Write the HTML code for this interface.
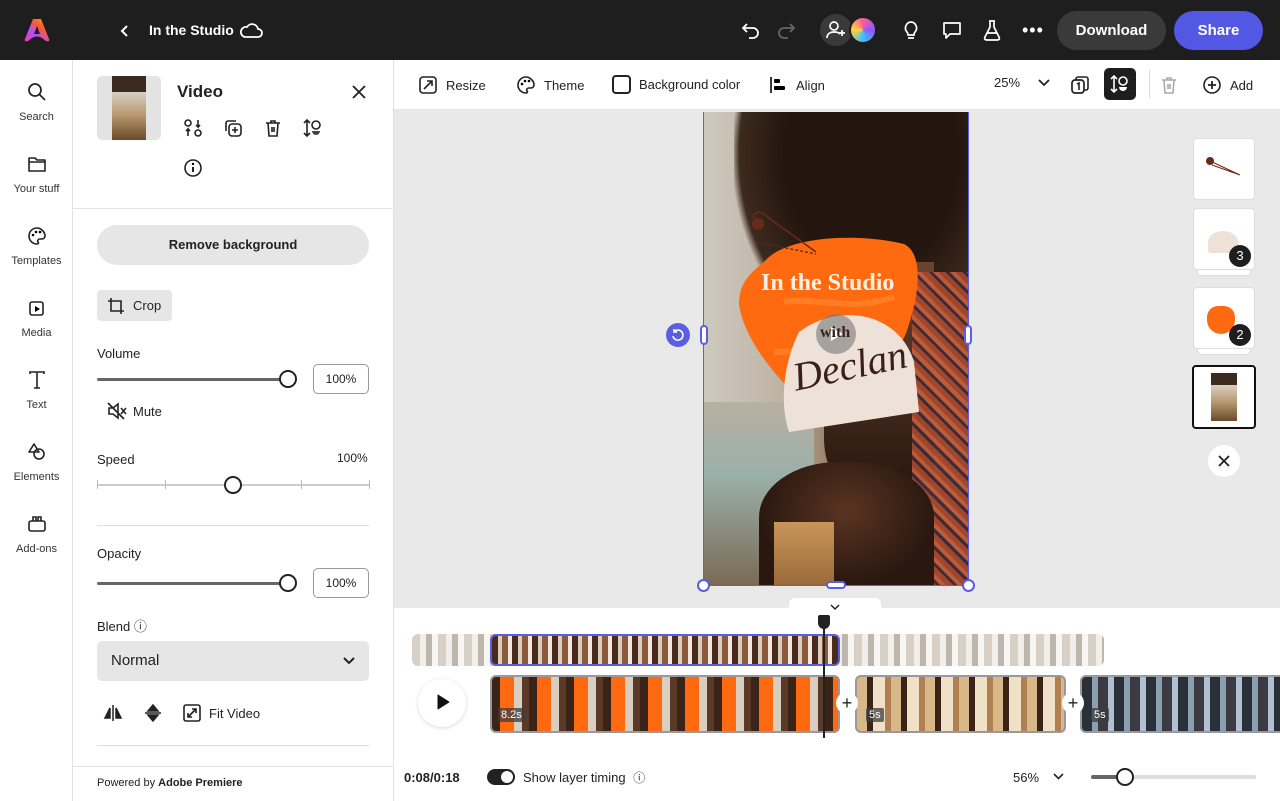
<!DOCTYPE html>
<html><head><meta charset="utf-8"><style>
*{box-sizing:border-box;margin:0;padding:0}
body{width:1280px;height:801px;overflow:hidden;font-family:"Liberation Sans",sans-serif;background:#e9e9e9;position:relative;color:#222}
.abs{position:absolute}
svg{display:block}
.top{left:0;top:0;width:1280px;height:60px;background:#1e1e1e;color:#fff}
.rail{left:0;top:60px;width:73px;height:741px;background:#fff;border-right:1px solid #e1e1e1}
.rail .it{position:absolute;left:0;width:73px;text-align:center;font-size:11px;color:#333}
.rail .it svg{margin:0 auto 9px}
.panel{left:73px;top:60px;width:321px;height:741px;background:#fff;border-right:1px solid #e1e1e1}
.tb{left:394px;top:60px;width:886px;height:50px;background:#fff;border-bottom:1px solid #e4e4e4;font-size:13px;color:#222}
.tb .b{position:absolute;top:15px;display:flex;align-items:center;gap:8px}
.tl{left:394px;top:608px;width:886px;height:193px;background:#fff}
.strip{background:repeating-linear-gradient(90deg,#b8aa98 0 8px,#e8e2d8 8px 14px,#8a7a6a 14px 20px,#f2eee8 20px 26px)}
.slider{height:3px;background:#666;border-radius:2px}
.knob{width:18px;height:18px;border:2px solid #222;border-radius:50%;background:#fff}
.inp{width:56px;height:30px;border:1.5px solid #999;border-radius:5px;font-size:12px;display:flex;align-items:center;justify-content:center}
</style></head><body>

<div class="abs top">
 <svg class="abs" style="left:24px;top:18px" width="26" height="24" viewBox="0 0 26 24"><defs><linearGradient id="g" x1="0" y1="1" x2="1" y2="0"><stop offset="0" stop-color="#ff3a9a"/><stop offset=".35" stop-color="#b050ff"/><stop offset=".65" stop-color="#ff5a2a"/><stop offset="1" stop-color="#ffbb00"/></linearGradient></defs><path d="M9 1h8l8 20c1 2-1 3-3 2l-4-3c-3-2-7-2-10 0l-4 3c-2 1-4 0-3-2z" fill="url(#g)"/><path d="M13 8l3 8h-6z" fill="#1e1e1e"/></svg>
 <svg class="abs" style="left:120px;top:24px" width="10" height="14" viewBox="0 0 10 14"><path d="M7 2L2 7l5 5" stroke="#fff" stroke-width="2" fill="none"/></svg>
 <div class="abs" style="left:149px;top:22px;font-size:14px;font-weight:bold">In the Studio</div>
 <svg class="abs" style="left:239px;top:21px" width="24" height="18" viewBox="0 0 24 18"><path d="M6 16h13a4 4 0 000-8 6 6 0 00-11-2 5 5 0 00-2 10z" stroke="#fff" stroke-width="1.8" fill="none"/></svg>
 <svg class="abs" style="left:741px;top:20px" width="20" height="20" viewBox="0 0 20 20"><path d="M6 4L2 8l4 4M2 8h10a5 5 0 010 10H8" stroke="#fff" stroke-width="1.8" fill="none"/></svg>
 <svg class="abs" style="left:776px;top:20px" width="20" height="20" viewBox="0 0 20 20"><path d="M14 4l4 4-4 4M18 8H8a5 5 0 000 10h4" stroke="#666" stroke-width="1.8" fill="none"/></svg>
 <div class="abs" style="left:820px;top:14px;width:32px;height:32px;border-radius:50%;background:#3a3a3a"></div>
 <svg class="abs" style="left:826px;top:20px" width="22" height="20" viewBox="0 0 22 20"><circle cx="8" cy="6" r="4" stroke="#fff" stroke-width="1.7" fill="none"/><path d="M1 18c0-4 3-6 7-6s5 1 6 2M16 10v6M13 13h6" stroke="#fff" stroke-width="1.7" fill="none"/></svg>
 <div class="abs" style="left:849px;top:16px;width:28px;height:28px;border-radius:50%;background:conic-gradient(#ff5a9a,#8a5aff,#3ac0ff,#ffd23a,#ff5a9a);border:2px solid #1e1e1e"></div>
 <svg class="abs" style="left:902px;top:20px" width="18" height="20" viewBox="0 0 18 20"><path d="M9 2a6 6 0 00-4 10c1 1 1 2 1 3h6c0-1 0-2 1-3A6 6 0 009 2zM6 18h6" stroke="#fff" stroke-width="1.7" fill="none"/></svg>
 <svg class="abs" style="left:942px;top:20px" width="20" height="20" viewBox="0 0 20 20"><path d="M2 3h16v11H8l-4 4v-4H2z" stroke="#fff" stroke-width="1.7" fill="none" stroke-linejoin="round"/></svg>
 <svg class="abs" style="left:982px;top:19px" width="20" height="22" viewBox="0 0 20 22"><path d="M7 2h6M8 2v6L3 18c-1 2 0 3 2 3h10c2 0 3-1 2-3L12 8V2M5 14h10" stroke="#fff" stroke-width="1.7" fill="none"/></svg>
 <div class="abs" style="left:1022px;top:20px;font-size:18px;letter-spacing:1px">•••</div>
 <div class="abs" style="left:1057px;top:11px;width:109px;height:39px;border-radius:20px;background:#3a3a3a;font-size:15px;font-weight:bold;text-align:center;line-height:39px">Download</div>
 <div class="abs" style="left:1174px;top:11px;width:89px;height:39px;border-radius:20px;background:#5258e4;font-size:15px;font-weight:bold;text-align:center;line-height:39px">Share</div>
</div>

<div class="abs rail">
 <div class="it" style="top:22px"><svg width="20" height="20" viewBox="0 0 20 20"><circle cx="8" cy="8" r="6" stroke="#222" stroke-width="1.7" fill="none"/><path d="M12.5 12.5L18 18" stroke="#222" stroke-width="1.7"/></svg>Search</div>
 <div class="it" style="top:94px"><svg width="20" height="20" viewBox="0 0 20 20"><path d="M2 4h6l2 2h8v11H2zM2 8h16" stroke="#222" stroke-width="1.6" fill="none" stroke-linejoin="round"/></svg>Your stuff</div>
 <div class="it" style="top:166px"><svg width="20" height="20" viewBox="0 0 20 20"><path d="M10 2a8 8 0 100 16c1 0 2-1 1-2s0-3 2-3h2a3 3 0 003-3c0-4-4-8-8-8z" stroke="#222" stroke-width="1.6" fill="none"/><circle cx="6" cy="9" r="1.3"/><circle cx="9" cy="6" r="1.3"/><circle cx="13" cy="6" r="1.3"/></svg>Templates</div>
 <div class="it" style="top:238px"><svg width="20" height="20" viewBox="0 0 20 20"><rect x="3" y="4" width="13" height="13" rx="2" stroke="#222" stroke-width="1.6" fill="none"/><path d="M8 8l5 3-5 3z"/></svg>Media</div>
 <div class="it" style="top:310px"><svg width="20" height="20" viewBox="0 0 20 20"><path d="M3 4V2h14v2M10 2v16M7 18h6" stroke="#222" stroke-width="1.6" fill="none"/></svg>Text</div>
 <div class="it" style="top:382px"><svg width="20" height="20" viewBox="0 0 20 20"><circle cx="12" cy="12" r="5" stroke="#222" stroke-width="1.6" fill="none"/><path d="M7 2l5 8H2z" stroke="#222" stroke-width="1.6" fill="none" stroke-linejoin="round"/></svg>Elements</div>
 <div class="it" style="top:454px"><svg width="20" height="20" viewBox="0 0 20 20"><rect x="2" y="7" width="16" height="10" rx="2" stroke="#222" stroke-width="1.6" fill="none"/><path d="M6 7V3h3v4M11 7V3h3v4" stroke="#222" stroke-width="1.6" fill="none"/></svg>Add-ons</div>
</div>

<div class="abs panel">
 <div class="abs" style="left:24px;top:16px;width:64px;height:64px;border-radius:5px;background:#e3e3e3;overflow:hidden"><div style="margin-left:15px;width:34px;height:64px;background:linear-gradient(180deg,#3a2a20 0 25%,#d8cfc2 25%,#b89a70 60%,#6a4a2a)"></div></div>
 <div class="abs" style="left:104px;top:22px;font-size:17px;font-weight:bold">Video</div>
 <svg class="abs" style="left:279px;top:25px" width="14" height="14" viewBox="0 0 14 14"><path d="M1 1l12 12M13 1L1 13" stroke="#222" stroke-width="1.8"/></svg>
 <svg class="abs" style="left:110px;top:58px" width="20" height="20" viewBox="0 0 20 20"><circle cx="5" cy="5" r="3" stroke="#222" stroke-width="1.6" fill="none"/><circle cx="15" cy="15" r="3" stroke="#222" stroke-width="1.6" fill="none"/><path d="M15 2v7l-2-2M15 9l2-2M5 18v-7l-2 2M5 11l2 2" stroke="#222" stroke-width="1.6" fill="none"/></svg>
 <svg class="abs" style="left:150px;top:58px" width="20" height="20" viewBox="0 0 20 20"><rect x="6" y="6" width="12" height="12" rx="3" stroke="#222" stroke-width="1.6" fill="none"/><path d="M3 13V5a2 2 0 012-2h8M12 9v6M9 12h6" stroke="#222" stroke-width="1.6" fill="none"/></svg>
 <svg class="abs" style="left:190px;top:58px" width="20" height="20" viewBox="0 0 20 20"><path d="M3 5h14M8 5V3h4v2M5 5l1 13h8l1-13M9 9v5M11 9v5" stroke="#222" stroke-width="1.6" fill="none"/></svg>
 <svg class="abs" style="left:230px;top:58px" width="20" height="20" viewBox="0 0 20 20"><path d="M4 2v16M1 5l3-3 3 3M1 15l3 3 3-3" stroke="#222" stroke-width="1.6" fill="none"/><circle cx="13" cy="7" r="4" stroke="#222" stroke-width="1.6" fill="none"/><path d="M9 13h8a4 4 0 01-8 0z" fill="#444"/></svg>
 <svg class="abs" style="left:110px;top:98px" width="20" height="20" viewBox="0 0 20 20"><circle cx="10" cy="10" r="8" stroke="#222" stroke-width="1.6" fill="none"/><path d="M10 9v5" stroke="#222" stroke-width="2"/><circle cx="10" cy="6" r="1.2"/></svg>
 <div class="abs" style="left:0;top:148px;width:321px;height:1px;background:#e4e4e4"></div>
 <div class="abs" style="left:24px;top:165px;width:272px;height:40px;border-radius:20px;background:#e6e6e6;font-size:13px;font-weight:bold;text-align:center;line-height:40px">Remove background</div>
 <div class="abs" style="left:24px;top:230px;width:75px;height:31px;border-radius:4px;background:#e6e6e6;font-size:13px;display:flex;align-items:center;gap:8px;padding-left:10px"><svg width="18" height="18" viewBox="0 0 18 18"><path d="M4 1v13h13M1 4h13v13" stroke="#222" stroke-width="1.6" fill="none"/></svg>Crop</div>
 <div class="abs" style="left:24px;top:286px;font-size:13px">Volume</div>
 <div class="abs slider" style="left:24px;top:318px;width:190px"></div>
 <div class="abs knob" style="left:206px;top:310px"></div>
 <div class="abs inp" style="left:240px;top:304px">100%</div>
 <svg class="abs" style="left:34px;top:342px" width="20" height="18" viewBox="0 0 20 18"><path d="M2 6h4l5-4v14l-5-4H2zM14 6l5 6M19 6l-5 6M1 1l16 16" stroke="#222" stroke-width="1.6" fill="none"/></svg>
 <div class="abs" style="left:60px;top:344px;font-size:13px">Mute</div>
 <div class="abs" style="left:24px;top:392px;font-size:13px">Speed</div>
 <div class="abs" style="left:264px;top:391px;font-size:12px">100%</div>
 <div class="abs" style="left:24px;top:424px;width:272px;height:2px;background:#ccc"></div>
 <div class="abs" style="left:24px;top:420px;width:1px;height:9px;background:#bbb"></div><div class="abs" style="left:92px;top:420px;width:1px;height:9px;background:#bbb"></div><div class="abs" style="left:228px;top:420px;width:1px;height:9px;background:#bbb"></div><div class="abs" style="left:296px;top:420px;width:1px;height:9px;background:#bbb"></div>
 <div class="abs knob" style="left:151px;top:416px"></div>
 <div class="abs" style="left:24px;top:465px;width:272px;height:1px;background:#ddd"></div>
 <div class="abs" style="left:24px;top:486px;font-size:13px">Opacity</div>
 <div class="abs slider" style="left:24px;top:522px;width:190px"></div>
 <div class="abs knob" style="left:206px;top:514px"></div>
 <div class="abs inp" style="left:240px;top:508px">100%</div>
 <div class="abs" style="left:24px;top:556px;font-size:13px">Blend ⓘ</div>
 <div class="abs" style="left:24px;top:581px;width:272px;height:40px;border-radius:5px;background:#e6e6e6;font-size:15px;line-height:40px;padding-left:14px">Normal</div>
 <svg class="abs" style="left:269px;top:596px" width="14" height="10" viewBox="0 0 14 10"><path d="M2 2l5 5 5-5" stroke="#222" stroke-width="2" fill="none"/></svg>
 <svg class="abs" style="left:30px;top:644px" width="20" height="18" viewBox="0 0 20 18"><path d="M10 1v16M7 4L2 14h5zM13 4l5 10h-5z" stroke="#222" stroke-width="1.5" fill="#222"/></svg>
 <svg class="abs" style="left:70px;top:644px" width="20" height="18" viewBox="0 0 20 18"><path d="M2 9h16M5 7l5-6 5 6zM5 11l5 6 5-6z" stroke="#222" stroke-width="1.5" fill="#222"/></svg>
 <svg class="abs" style="left:110px;top:644px" width="18" height="18" viewBox="0 0 18 18"><rect x="1" y="1" width="16" height="16" rx="2" stroke="#222" stroke-width="1.6" fill="none"/><path d="M5 13l8-8M9 5h4v4M5 9v4h4" stroke="#222" stroke-width="1.6" fill="none"/></svg>
 <div class="abs" style="left:136px;top:646px;font-size:13px">Fit Video</div>
 <div class="abs" style="left:24px;top:685px;width:272px;height:1px;background:#ddd"></div>
 <div class="abs" style="left:0;top:706px;width:321px;height:1px;background:#e4e4e4"></div>
 <div class="abs" style="left:24px;top:717px;font-size:11px">Powered by <b>Adobe Premiere</b></div>
</div>

<div class="abs tb">
 <div class="b" style="left:24px"><svg width="20" height="20" viewBox="0 0 20 20"><rect x="2" y="2" width="16" height="16" rx="3" stroke="#222" stroke-width="1.6" fill="none"/><path d="M6 14l8-8M9 6h5v5" stroke="#222" stroke-width="1.6" fill="none"/></svg>Resize</div>
 <div class="b" style="left:122px"><svg width="20" height="20" viewBox="0 0 20 20"><path d="M10 2a8 8 0 100 16c1 0 2-1 1-2s0-3 2-3h2a3 3 0 003-3c0-4-4-8-8-8z" stroke="#222" stroke-width="1.6" fill="none"/><circle cx="6" cy="9" r="1.3"/><circle cx="9" cy="6" r="1.3"/><circle cx="13" cy="6" r="1.3"/></svg>Theme</div>
 <div class="b" style="left:218px"><div style="width:19px;height:19px;border:2px solid #222;border-radius:4px"></div>Background color</div>
 <div class="b" style="left:374px"><svg width="20" height="20" viewBox="0 0 20 20"><path d="M3 2v16" stroke="#222" stroke-width="1.8"/><rect x="6" y="4" width="6" height="4" rx="1"/><rect x="6" y="11" width="11" height="4" rx="1"/></svg>Align</div>
 <div class="b" style="left:600px">25% <svg width="12" height="8" viewBox="0 0 12 8" style="margin-left:10px"><path d="M1 1l5 5 5-5" stroke="#222" stroke-width="1.8" fill="none"/></svg></div>
 <svg class="abs" style="left:676px;top:15px" width="20" height="20" viewBox="0 0 20 20"><rect x="2" y="5" width="12" height="13" rx="3" stroke="#222" stroke-width="1.7" fill="none"/><path d="M6 5V4a2 2 0 012-2h8a2 2 0 012 2v9a2 2 0 01-2 2h-2M7 9l2-1v7" stroke="#222" stroke-width="1.6" fill="none"/></svg>
 <div class="abs" style="left:710px;top:8px;width:32px;height:32px;border-radius:5px;background:#1e1e1e"></div>
 <svg class="abs" style="left:716px;top:14px" width="20" height="20" viewBox="0 0 20 20"><path d="M4 2v16M1 5l3-3 3 3M1 15l3 3 3-3" stroke="#fff" stroke-width="1.6" fill="none"/><circle cx="13" cy="7" r="4" stroke="#fff" stroke-width="1.6" fill="none"/><path d="M9 13h8a4 4 0 01-8 0z" fill="#fff"/></svg>
 <div class="abs" style="left:755px;top:10px;width:1px;height:28px;background:#ddd"></div>
 <svg class="abs" style="left:765px;top:15px" width="20" height="20" viewBox="0 0 20 20"><path d="M3 5h14M8 5V3h4v2M5 5l1 13h8l1-13M9 9v5M11 9v5" stroke="#aaa" stroke-width="1.6" fill="none"/></svg>
 <div class="b" style="left:808px"><svg width="20" height="20" viewBox="0 0 20 20"><circle cx="10" cy="10" r="8" stroke="#222" stroke-width="1.6" fill="none"/><path d="M10 6v8M6 10h8" stroke="#222" stroke-width="1.8"/></svg>Add</div>
</div>

<!-- canvas -->
<div class="abs" style="left:704px;top:112px;width:264px;height:473px;overflow:hidden;background:linear-gradient(90deg,#cfc9be 0%,#bdb3a4 30%,#8a6a50 55%,#4a2e20 100%)">
 <div class="abs" style="left:0;top:290px;width:110px;height:183px;background:linear-gradient(180deg,#b8b0a0,#9ab0aa 40%,#7a6a55)"></div>
 <div class="abs" style="left:30px;top:-40px;width:250px;height:270px;border-radius:0 0 45% 35%;background:radial-gradient(ellipse at 55% 30%,#24160e 45%,#3d2a1e 68%,transparent 72%)"></div>
 <div class="abs" style="left:120px;top:150px;width:110px;height:220px;background:linear-gradient(180deg,#6a4430,#2a1810);border-radius:30% 0 0 20%"></div>
 <div class="abs" style="left:208px;top:160px;width:56px;height:313px;background:repeating-linear-gradient(45deg,#a8482e 0 5px,#3a2a3a 5px 8px,#c8603a 8px 12px);opacity:.9"></div>
 <div class="abs" style="left:55px;top:350px;width:175px;height:123px;background:radial-gradient(ellipse at 50% 40%,#5a3422,#2a1810 70%);border-radius:45% 45% 0 0"></div>
 <div class="abs" style="left:70px;top:410px;width:60px;height:63px;background:linear-gradient(180deg,#c8965a,#9a6a3a)"></div>
 <svg class="abs" style="left:0;top:0" width="264" height="473" viewBox="0 0 264 473"><path d="M60 150c20-25 90-30 140-18 20 10 15 50 5 80-10 40-60 75-90 90-30-20-75-70-80-110 0-20 10-30 25-42z" fill="#ff6a10"/><path d="M80 190c30-5 70 10 110-5M70 240c40 0 80-15 125 5" stroke="#ff8a30" stroke-width="6" fill="none" opacity=".6"/><path d="M95 220c40-30 100-20 115 30l5 50-130 20c-10-30-5-70 10-100z" fill="#eee2d8"/><path d="M52 110c-8-8 5-14 10-6l50 36" stroke="#6a2a1a" stroke-width="1.5" fill="none"/><circle cx="54" cy="112" r="6" fill="#6a2a1a"/><path d="M52 130l60 12" stroke="#5a2a1a" stroke-width="1.3" stroke-dasharray="3 2"/></svg>
 <div class="abs" style="left:57px;top:158px;font-family:'Liberation Serif',serif;font-weight:bold;font-size:24px;color:#fdf0e0">In the Studio</div>
 <div class="abs" style="left:112px;top:202px;width:40px;height:40px;border-radius:50%;background:rgba(120,120,120,.6)"></div>
 <svg class="abs" style="left:126px;top:214px" width="14" height="16" viewBox="0 0 14 16"><path d="M1 1l12 7-12 7z" fill="#fff"/></svg>
 <div class="abs" style="left:116px;top:212px;font-family:'Liberation Serif',serif;font-weight:bold;font-size:16px;color:#3a2018">with</div>
 <div class="abs" style="left:88px;top:230px;font-family:'Liberation Serif',serif;font-style:italic;font-size:40px;color:#3a2018;transform:rotate(-12deg)">Declan</div>
</div>
<div class="abs" style="left:703px;top:112px;width:266px;height:474px;border:1.5px solid #5a5ee0;border-top:none"></div>
<div class="abs" style="left:700px;top:325px;width:8px;height:20px;border:2px solid #5a5ee0;border-radius:4px;background:#fff"></div>
<div class="abs" style="left:964px;top:325px;width:8px;height:20px;border:2px solid #5a5ee0;border-radius:4px;background:#fff"></div>
<div class="abs" style="left:826px;top:581px;width:20px;height:8px;border:2px solid #5a5ee0;border-radius:4px;background:#fff"></div>
<div class="abs" style="left:697px;top:579px;width:13px;height:13px;border:2px solid #5a5ee0;border-radius:50%;background:#fff"></div>
<div class="abs" style="left:962px;top:579px;width:13px;height:13px;border:2px solid #5a5ee0;border-radius:50%;background:#fff"></div>
<div class="abs" style="left:666px;top:323px;width:24px;height:24px;border-radius:50%;background:#5a5ee0"></div>
<svg class="abs" style="left:671px;top:328px" width="14" height="14" viewBox="0 0 14 14"><path d="M3 4a5 5 0 11-1 4M3 1v3h3" stroke="#fff" stroke-width="1.6" fill="none"/></svg>

<!-- layers -->
<div class="abs" style="left:1193px;top:138px;width:62px;height:62px;background:#fff;border:1px solid #ddd;border-radius:4px"><svg width="60" height="60" viewBox="0 0 60 60"><circle cx="16" cy="22" r="4" fill="#6a2a1a"/><path d="M16 22l30 14M18 26l28 10" stroke="#6a2a1a" stroke-width="1"/></svg></div>
<div class="abs" style="left:1197px;top:268px;width:54px;height:8px;background:#fff;border:1px solid #ddd;border-radius:0 0 4px 4px"></div>
<div class="abs" style="left:1193px;top:208px;width:62px;height:62px;background:#fff;border:1px solid #ddd;border-radius:4px"><div style="margin:22px 0 0 14px;width:30px;height:22px;background:#eee2d8;border-radius:50% 50% 10% 10%"></div></div>
<div class="abs" style="left:1229px;top:245px;width:22px;height:22px;border-radius:50%;background:#1e1e1e;color:#fff;font-size:13px;text-align:center;line-height:22px">3</div>
<div class="abs" style="left:1197px;top:347px;width:54px;height:8px;background:#fff;border:1px solid #ddd;border-radius:0 0 4px 4px"></div>
<div class="abs" style="left:1193px;top:287px;width:62px;height:62px;background:#fff;border:1px solid #ddd;border-radius:4px"><div style="margin:18px 0 0 13px;width:28px;height:28px;background:#ff6a10;border-radius:40% 40% 50% 50%"></div></div>
<div class="abs" style="left:1229px;top:324px;width:22px;height:22px;border-radius:50%;background:#1e1e1e;color:#fff;font-size:13px;text-align:center;line-height:22px">2</div>
<div class="abs" style="left:1192px;top:365px;width:64px;height:64px;background:#fff;border:2px solid #111;border-radius:4px"><div style="margin:6px 0 0 17px;width:26px;height:48px;background:linear-gradient(180deg,#3a2a20 0 25%,#d8cfc2 25%,#b89a70 60%,#6a4a2a)"></div></div>
<div class="abs" style="left:1208px;top:445px;width:32px;height:32px;border-radius:50%;background:#fff"></div>
<svg class="abs" style="left:1218px;top:455px" width="12" height="12" viewBox="0 0 12 12"><path d="M1 1l10 10M11 1L1 11" stroke="#222" stroke-width="1.8"/></svg>

<!-- timeline -->
<div class="abs tl"></div>
<div class="abs" style="left:789px;top:598px;width:92px;height:14px;border-radius:6px 6px 0 0;background:#fff"></div>
<svg class="abs" style="left:830px;top:604px" width="10" height="7" viewBox="0 0 10 7"><path d="M1 1l4 4 4-4" stroke="#222" stroke-width="1.5" fill="none"/></svg>
<div class="abs strip" style="left:412px;top:634px;width:692px;height:32px;border-radius:6px;opacity:.55"></div>
<div class="abs" style="left:490px;top:634px;width:350px;height:32px;border:2px solid #5a5ee0;border-radius:6px;background:repeating-linear-gradient(90deg,#4a2a1a 0 6px,#d8cfc2 6px 10px,#8a5a3a 10px 16px,#f0e8de 16px 20px)"></div>
<div class="abs" style="left:418px;top:679px;width:48px;height:48px;border-radius:50%;background:#fff;box-shadow:0 1px 4px rgba(0,0,0,.15)"></div>
<svg class="abs" style="left:436px;top:694px" width="14" height="16" viewBox="0 0 14 16"><path d="M2 1l11 7-11 7z" fill="#111" stroke="#111" stroke-linejoin="round"/></svg>
<div class="abs" style="left:490px;top:675px;width:350px;height:58px;border:2px solid #999;border-radius:6px;background:repeating-linear-gradient(90deg,#3a2418 0 8px,#ff6a10 8px 22px,#d8cfc2 22px 30px,#5a3a26 30px 37px)"></div>
<div class="abs" style="left:498px;top:708px;padding:1px 3px;background:rgba(60,60,60,.75);color:#fff;font-size:11px;border-radius:2px">8.2s</div>
<div class="abs" style="left:855px;top:675px;width:211px;height:58px;border:2px solid #999;border-radius:6px;background:repeating-linear-gradient(90deg,#d8b888 0 10px,#3a2418 10px 16px,#f0e0c8 16px 28px,#b08050 28px 34px)"></div>
<div class="abs" style="left:866px;top:708px;padding:1px 3px;background:rgba(60,60,60,.75);color:#fff;font-size:11px;border-radius:2px">5s</div>
<div class="abs" style="left:1080px;top:675px;width:210px;height:58px;border:2px solid #999;border-radius:6px;background:repeating-linear-gradient(90deg,#2a3038 0 10px,#8aa0b0 10px 16px,#3a3a40 16px 26px,#b0c0d0 26px 32px)"></div>
<div class="abs" style="left:1091px;top:708px;padding:1px 3px;background:rgba(60,60,60,.75);color:#fff;font-size:11px;border-radius:2px">5s</div>
<div class="abs" style="left:836px;top:692px;width:22px;height:22px;border-radius:50%;background:#fff;font-size:18px;text-align:center;line-height:22px">+</div>
<div class="abs" style="left:1062px;top:692px;width:22px;height:22px;border-radius:50%;background:#fff;font-size:18px;text-align:center;line-height:22px">+</div>
<div class="abs" style="left:823px;top:626px;width:2px;height:112px;background:#222"></div>
<div class="abs" style="left:818px;top:615px;width:12px;height:14px;background:#222;border-radius:2px 2px 6px 6px"></div>
<div class="abs" style="left:404px;top:770px;font-size:13px;font-weight:bold">0:08/0:18</div>
<div class="abs" style="left:487px;top:769px;width:28px;height:16px;border-radius:8px;background:#222"></div>
<div class="abs" style="left:501px;top:771px;width:12px;height:12px;border-radius:50%;background:#fff"></div>
<div class="abs" style="left:523px;top:769px;font-size:13px">Show layer timing <span style="font-size:12px;margin-left:4px">ⓘ</span></div>
<div class="abs" style="left:1013px;top:770px;font-size:13px">56%</div>
<svg class="abs" style="left:1053px;top:773px" width="11" height="8" viewBox="0 0 11 8"><path d="M1 1l4.5 4.5L10 1" stroke="#222" stroke-width="1.6" fill="none"/></svg>
<div class="abs" style="left:1091px;top:775px;width:165px;height:4px;border-radius:2px;background:#ddd"></div>
<div class="abs" style="left:1091px;top:775px;width:34px;height:4px;border-radius:2px;background:#666"></div>
<div class="abs knob" style="left:1116px;top:768px"></div>
</body></html>
